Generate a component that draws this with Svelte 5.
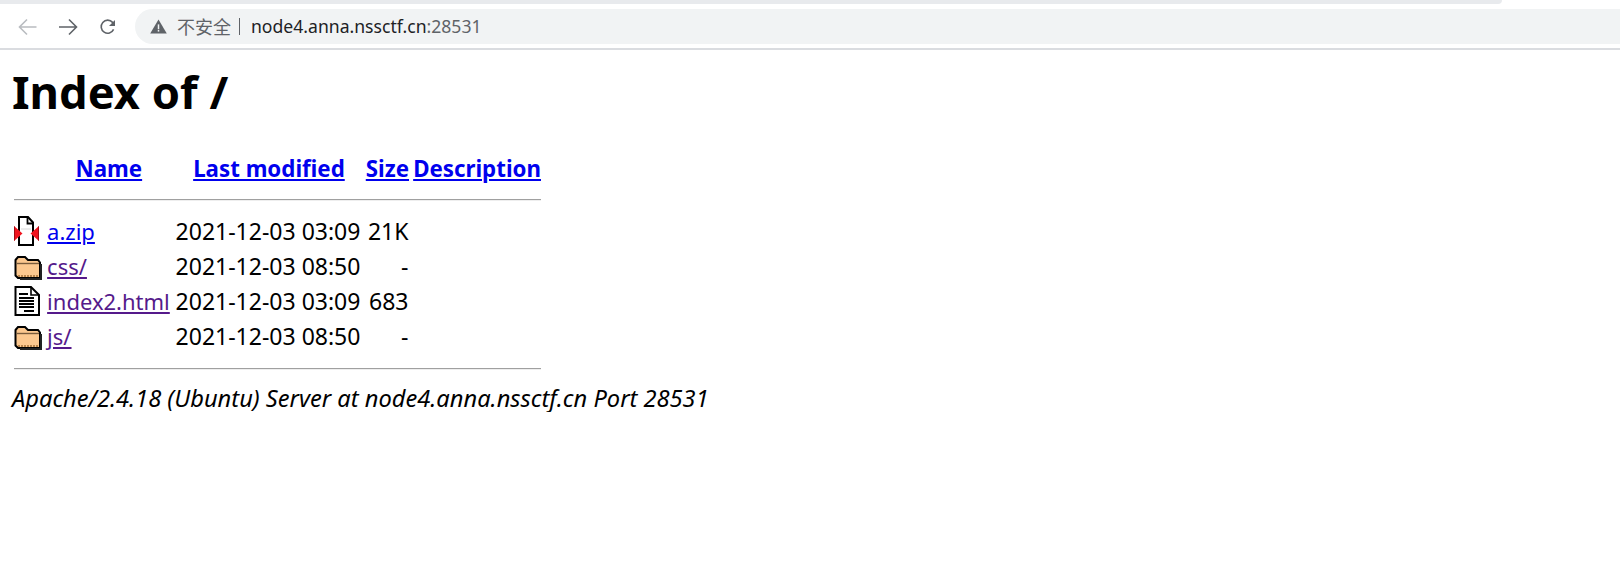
<script>
  const rows = [
    { icon: 'zip', name: 'a.zip', date: '2021-12-03 03:09', size: '21K', fresh: true },
    { icon: 'folder', name: 'css/', date: '2021-12-03 08:50', size: '-' },
    { icon: 'doc', name: 'index2.html', date: '2021-12-03 03:09', size: '683' },
    { icon: 'folder', name: 'js/', date: '2021-12-03 08:50', size: '-' }
  ];
</script>

<div class="chrome">
  <div class="tabstrip"><div class="tabband"></div></div>
  <div class="toolbar">
    <div class="navs">
      <svg class="nav" viewBox="0 0 20 20" width="20" height="20"><path d="M18.5 10H1.500M9 2.500 1.500 10 9 17.500" fill="none" stroke="#b9bcc0" stroke-width="1.6"/></svg>
      <svg class="nav" viewBox="0 0 20 20" width="20" height="20"><path d="M1 10H18.500M11 2.500 18.500 10 11 17.500" fill="none" stroke="#5f6368" stroke-width="1.6"/></svg>
      <svg class="nav" viewBox="0 0 20 20" width="20" height="20"><path d="M15.6 12.4A6.5 6.5 0 1 1 14.6 5.4L16.5 7.5" fill="none" stroke="#5f6368" stroke-width="1.6"/><path d="M17 3v6h-6z" fill="#5f6368"/></svg>
    </div>
    <div class="omnibox">
      <svg viewBox="0 0 16 16" width="17" height="17"><path d="M8 1.500 15.800 14.500H.2z" fill="#5f6368"/><rect x="7.3" y="6" width="1.4" height="4.6" fill="#f1f3f4"/><rect x="7.3" y="11.3" width="1.4" height="1.5" fill="#f1f3f4"/></svg>
      <span class="insecure">不安全</span>
      <span class="sep"></span>
      <span class="url">node4.anna.nssctf.cn<span class="port">:28531</span></span>
    </div>
  </div>
</div>

<main>
  <h1>Index of /</h1>
  <table>
    <thead>
      <tr>
        <th class="ic"></th>
        <th class="c-name"><a href="#n">Name</a></th>
        <th class="c-date"><a href="#m">Last modified</a></th>
        <th class="c-size"><a href="#s">Size</a></th>
        <th class="c-desc"><a href="#d">Description</a></th>
      </tr>
      <tr><th colspan="5" class="rule"><hr /></th></tr>
    </thead>
    <tbody>
      {#each rows as r}
        <tr class="row">
          <td class="ic">
            {#if r.icon === 'zip'}
              <svg class="i-zip" viewBox="0 0 25 30" width="25" height="30">
                <path d="M5 1H14L19 6.500V29H5z" fill="#fff" stroke="#000" stroke-width="2"/>
                <path d="M13.500 1V7.500H19" fill="none" stroke="#000" stroke-width="1.800"/>
                <path d="M7 13H17" stroke="#d8d8d8" stroke-width="1"/>
                <path d="M0 10 8.500 17.500 0 25zM25 10 16.500 17.500 25 25z" fill="#f0141e"/>
                <path d="M.5 10.500V24.500M24.500 10.500V24.500" stroke="#a00c14" stroke-width="1"/>
              </svg>
            {:else if r.icon === 'folder'}
              <svg class="i-folder" viewBox="0 0 28 25" width="28" height="25">
                <path d="M1.500 5 4 2H11L14 5H24L26 7.500V23H4L1.500 20.500z" fill="#fcc88f" stroke="#000" stroke-width="2"/>
                <path d="M2.500 8.500H25" stroke="#7a5c3c" stroke-width="1.400"/>
                <path d="M4 21H24" stroke="#a06c35" stroke-width="1.500" stroke-dasharray="2 1"/>
                <path d="M27 9V24H6" fill="none" stroke="#222" stroke-width="2"/>
              </svg>
            {:else}
              <svg class="i-doc" viewBox="0 0 26 30" width="26" height="30">
                <path d="M1.500 1H17L25 9V29H1.500z" fill="#fff" stroke="#000" stroke-width="2"/>
                <path d="M17 1V9H25" fill="none" stroke="#000" stroke-width="1.600"/>
                <path d="M5 8H14M5 12H20M5 15H20M5 18H20M5 21H20M10 25H20" stroke="#000" stroke-width="2"/>
              </svg>
            {/if}
          </td>
          <td class="c-name"><a class:fresh={r.fresh} class="file" href="#f">{r.name}</a></td>
          <td class="c-date">{r.date}</td>
          <td class="c-size">{r.size}</td>
          <td class="c-desc"></td>
        </tr>
      {/each}
      <tr><th colspan="5" class="rule bottom"><hr /></th></tr>
    </tbody>
  </table>
  <address>Apache/2.4.18 (Ubuntu) Server at node4.anna.nssctf.cn Port 28531</address>
</main>

<style>
  :global(body) {
    margin: 0;
    background: #fff;
    color: #000;
    font-family: "Noto Sans", "Noto Sans CJK SC", sans-serif;
    font-size: 22px;
    overflow: hidden;
  }
  .chrome {
    height: 50px;
    border-bottom: 2px solid #dadce0;
    box-sizing: border-box;
    display: flex;
    flex-direction: column;
  }
  .tabstrip {
    height: 9px;
    flex: none;
  }
  .tabband {
    width: 1502px;
    height: 4px;
    background: #e8eaed;
    border-bottom-right-radius: 8px;
  }
  .toolbar {
    display: flex;
    align-items: center;
    height: 35px;
    flex: none;
  }
  .navs {
    display: flex;
    gap: 20px;
    padding-left: 18px;
    width: 117px;
    flex: none;
  }
  .nav { display: block; }
  .omnibox {
    flex: 1;
    height: 35px;
    background: #f1f3f4;
    border-radius: 18px 0 0 18px;
    display: flex;
    align-items: center;
    padding-left: 15px;
    font-family: "Noto Sans CJK SC", sans-serif;
    font-size: 18px;
    line-height: 1;
  }
  .insecure { margin: 0 0 2px 10px; color: #5f6368; }
  .sep {
    width: 1px;
    height: 17px;
    background: #5f6368;
    margin: 0 11px 0 8px;
  }
  .url {
    font-family: "Noto Sans", sans-serif;
    font-size: 17.6px;
    color: #202124;
  }
  .port { color: #5f6368; }

  main { padding: 0 12px; }
  h1 {
    font-size: 45.3px;
    font-weight: 700;
    line-height: 56px;
    margin: 14px 0 0;
  }
  table {
    border-spacing: 2px 0;
    margin-top: 30px;
    border-collapse: separate;
    table-layout: fixed;
    width: 531px;
  }
  th, td { padding: 0; vertical-align: middle; }
  thead tr:first-child th { height: 34px; padding-top: 2px; box-sizing: border-box; font-size: 22.3px; font-weight: 700; text-align: center; white-space: nowrap; }
  thead tr:first-child th.c-name { padding-right: 3px; }
  thead tr:first-child th.c-desc { text-align: right; padding-right: 0; }
  .row td { height: 35px; white-space: nowrap; }
  .ic { width: 31px; }
  .ic svg { display: block; }
  .i-folder { margin-top: 4px; }
  .c-name { width: 126px; text-align: left; }
  .c-date { width: 186px; font-size: 23px; }
  .c-size { width: 46px; font-size: 23px; text-align: right; }
  .row .c-size { padding-right: 2px; }
  .c-desc { width: 128px; }
  a { color: #0000ee; text-decoration: underline; }
  a.file { color: #551a8b; }
  a.file.fresh { color: #0000ee; }
  .rule hr {
    margin: 0;
    border: none;
    border-top: 1px solid #a0a0a0;
    border-bottom: 1px solid #eee;
  }
  .rule:not(.bottom) { height: 29px; vertical-align: top; padding-top: 15px; box-sizing: border-box; }
  .bottom { height: 14px; padding-top: 15px; vertical-align: top; }
  address {
    font-style: italic;
    font-size: 23.65px;
    line-height: 28px;
    margin-top: 2px;
    white-space: nowrap;
  }
</style>
